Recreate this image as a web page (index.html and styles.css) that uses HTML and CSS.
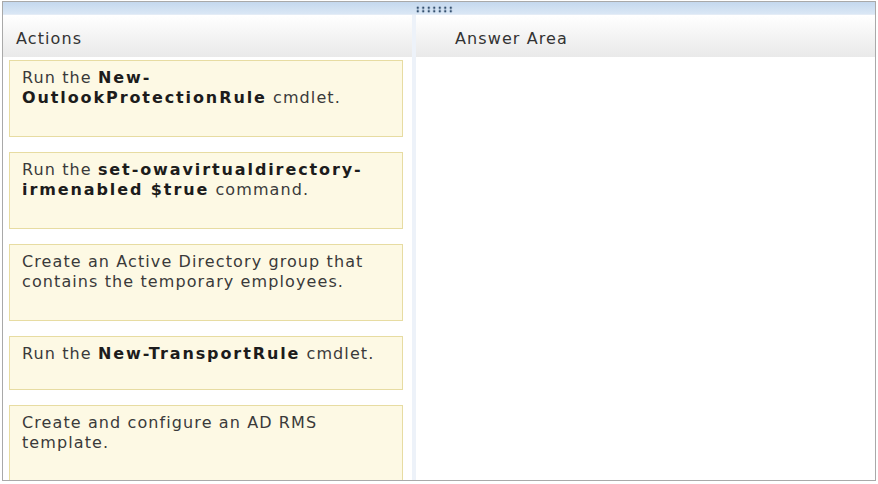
FILE: index.html
```html
<!DOCTYPE html>
<html lang="en">

<head>
    <meta charset="UTF-8">
    <title>Actions / Answer Area</title>
    <link rel="stylesheet" href="styles.css">
</head>

<body>
    <div class="frame">
        <div class="topbar">
            <div class="grip"></div>
        </div>

        <div class="columns">
            <div class="panel actions">
                <div class="panel-head">Actions</div>
                <div class="card">Run the <b>New-OutlookProtectionRule</b> cmdlet.</div>
                <div class="card">Run the <b>set-owavirtualdirectory-irmenabled $true</b> command.</div>
                <div class="card">Create an Active Directory group that contains the temporary employees.</div>
                <div class="card single">Run the <b>New-TransportRule</b> cmdlet.</div>
                <div class="card">Create and configure an AD RMS template.</div>
            </div>

            <div class="divider"></div>

            <div class="panel answer">
                <div class="panel-head">Answer Area</div>
            </div>
        </div>
    </div>
</body>

</html>
```

FILE: styles.css
```css
html,
body {
    margin: 0;
    padding: 0;
    background: #ffffff;
}

body {
    font-family: 'DejaVu Sans', Verdana, sans-serif;
    font-size: 16px;
    letter-spacing: 1.1px;
    color: #3a3a3a;
}

.frame {
    width: 874px;
    height: 480px;
    margin: 1px 0 0 2px;
    border: 1px solid #a9a9a9;
    box-sizing: border-box;
    display: flex;
    flex-direction: column;
    overflow: hidden;
}

.topbar {
    height: 13px;
    flex: none;
    background: linear-gradient(#c4d8ee, #dae7f5);
    border-bottom: 1px solid #e4ecf6;
    box-sizing: border-box;
    padding: 4px 0 0 412px;
}

.grip {
    width: 39px;
    height: 7px;
    background-image: radial-gradient(circle, #34506f 1.1px, transparent 1.5px);
    background-size: 5.5px 3.5px;
}

.columns {
    flex: 1;
    display: flex;
    min-height: 0;
}

.panel {
    display: flex;
    flex-direction: column;
    overflow: hidden;
}

.actions {
    width: 409px;
    flex: none;
}

.answer {
    flex: 1;
}

.divider {
    width: 4px;
    flex: none;
    background: #edf2f9;
}

.panel-head {
    height: 42px;
    flex: none;
    box-sizing: border-box;
    padding: 14px 0 0 13px;
    line-height: 20px;
    background: linear-gradient(#ffffff, #e9e9e9);
    color: #333333;
}

.answer .panel-head {
    padding-left: 39px;
}

.card {
    flex: none;
    width: 394px;
    box-sizing: border-box;
    margin: 3px 0 12px 6px;
    padding: 7px 12px 28px;
    line-height: 20px;
    background: #fdf9e4;
    border: 1px solid #e7dca2;
}

.card.single {
    padding-bottom: 25px;
}

.card b {
    color: #1c1c1c;
    letter-spacing: 1.9px;
}
```
